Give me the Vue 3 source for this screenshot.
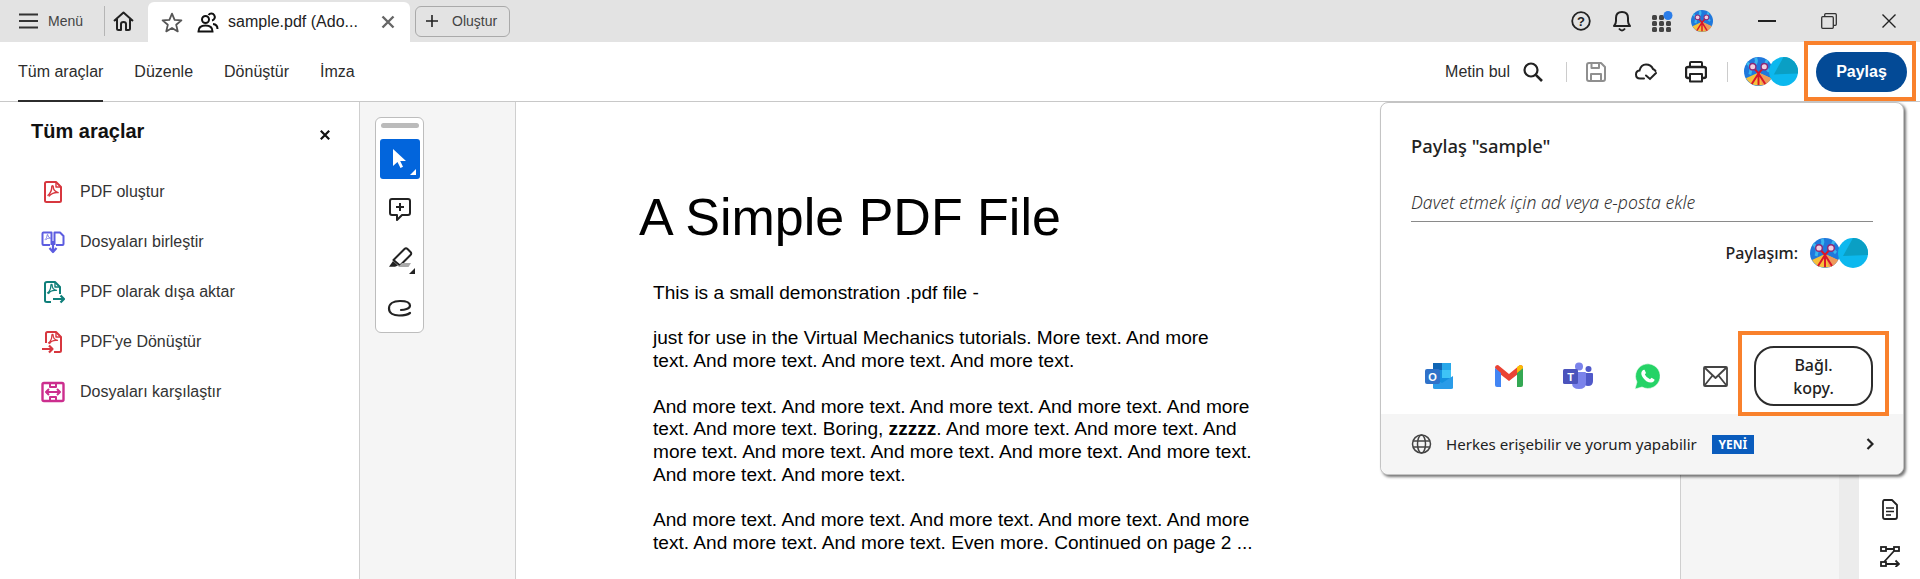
<template>
  <div class="app">
    <!-- shared symbols -->
    <svg class="defs" width="0" height="0">
      <symbol id="avatar-a" viewBox="0 0 30 30">
        <circle cx="15" cy="15" r="15" fill="#1f78dc" />
        <path d="M3 6 Q9 10 6 18 M24 3 Q20 10 26 15 M12 1 Q14 5 11 8" stroke="#39b6ee" stroke-width="3" fill="none" />
        <path d="M2 22 L15 16 L28 22 A15 15 0 0 1 2 22Z" fill="#f6c03c" />
        <path d="M15 16 L28 22 A15 15 0 0 1 19 29.500Z" fill="#ee9a5a" />
        <path d="M9 10 L15 17 L21 10 M15 17 L8 28 M15 17 L22 28 M15 17 V29" stroke="#d9162a" stroke-width="2" fill="none" />
        <circle cx="9" cy="10" r="3.300" fill="#f3cfe0" stroke="#8a2a78" stroke-width="1.400" />
        <circle cx="21" cy="10" r="3.300" fill="#f3cfe0" stroke="#8a2a78" stroke-width="1.400" />
      </symbol>
      <symbol id="avatar-b" viewBox="0 0 30 30">
        <circle cx="15" cy="15" r="15" fill="#0cb8ee" />
        <path d="M15 0 A15 15 0 0 1 30 15 V17 L5 18 Z" fill="#0a9fc4" />
      </symbol>
      <symbol id="pdf-glyph" viewBox="0 0 24 24">
        <path d="M5 18 C9 15 11 9 11 5 C11 3.500 13 3.500 13 5 C13 9 16 12.500 20 13.500 C15 13 9 15 7 19" fill="none" stroke="currentColor" stroke-width="2" />
      </symbol>
    </svg>

    <header class="titlebar">
      <svg class="menu-icon" width="19" height="16" viewBox="0 0 19 16"><path d="M0 1.500H19M0 8H19M0 14.500H19" stroke="#333" stroke-width="2" /></svg>
      <span class="menu-label">Menü</span>
      <span class="title-sep"></span>
      <svg class="home-icon" width="21" height="20" viewBox="0 0 21 20" fill="none" stroke="#222" stroke-width="2" stroke-linejoin="round"><path d="M1 10 L10.500 1.500 L20 10 M4 8 V17.500 Q4 19 5.500 19 H8 V13 Q8 11 10.500 11 Q13 11 13 13 V19 H15.500 Q17 19 17 17.500 V8" /></svg>
      <div class="tab">
        <svg width="22" height="21" viewBox="0 0 21 20" fill="none" stroke="#555" stroke-width="1.700" stroke-linejoin="round"><path d="M10.500 1.500 L13 7.500 L19.500 8 L14.500 12.200 L16 18.500 L10.500 15.200 L5 18.500 L6.500 12.200 L1.500 8 L8 7.500Z" /></svg>
        <svg class="people" width="22" height="21" viewBox="0 0 22 21" fill="none" stroke="#111" stroke-width="2"><circle cx="8.500" cy="7.500" r="3.500" /><path d="M1.500 19.500 Q1.500 13.500 8.500 13.500 Q15.500 13.500 15.500 19.500 Z" /><path d="M11.500 3 A3.500 3.500 0 1 1 15 8.500 M16 12 Q20.500 12.500 20.500 17" /></svg>
        <span class="tab-name">sample.pdf (Ado...</span>
        <svg class="tab-close" width="14" height="14" viewBox="0 0 14 14"><path d="M1.500 1.500L12.500 12.500M12.500 1.500L1.500 12.500" stroke="#666" stroke-width="2.400" /></svg>
      </div>
      <button class="create-btn">
        <svg width="12" height="12" viewBox="0 0 12 12"><path d="M6 0V12M0 6H12" stroke="#222" stroke-width="1.600" /></svg>
        <span>Oluştur</span>
      </button>

      <div class="title-right">
        <svg width="20" height="20" viewBox="0 0 20 20"><circle cx="10" cy="10" r="8.800" fill="none" stroke="#222" stroke-width="1.800" /><text x="10" y="14.500" text-anchor="middle" class="help-mark">?</text></svg>
        <svg class="bell" width="20" height="22" viewBox="0 0 20 22" fill="none" stroke="#222" stroke-width="2" stroke-linejoin="round"><path d="M2 16 Q4 14 4 11 V8 Q4 2 10 2 Q16 2 16 8 V11 Q16 14 18 16 Z" /><path d="M7 18.500 Q10 22.500 13 18.500" /></svg>
        <svg class="apps" width="22" height="21" viewBox="0 0 22 21" fill="#444">
          <rect x="0" y="4" width="5" height="5" rx="1.500" /><rect x="7" y="4" width="5" height="5" rx="1.500" />
          <rect x="0" y="10" width="5" height="5" rx="1.500" /><rect x="7" y="10" width="5" height="5" rx="1.500" /><rect x="14" y="10" width="5" height="5" rx="1.500" />
          <rect x="0" y="16" width="5" height="5" rx="1.500" /><rect x="7" y="16" width="5" height="5" rx="1.500" /><rect x="14" y="16" width="5" height="5" rx="1.500" />
          <circle cx="16" cy="4.500" r="4.500" fill="#2b7de9" />
        </svg>
        <svg class="title-avatar" width="22" height="22"><use href="#avatar-a" /></svg>
        <svg class="win-min" width="18" height="2"><rect width="18" height="2" fill="#222" /></svg>
        <svg class="win-max" width="16" height="16" viewBox="0 0 16 16" fill="none" stroke="#333" stroke-width="1.300"><rect x="0.700" y="3.700" width="11.600" height="11.600" rx="1" /><path d="M3.700 3.500 V1.700 Q3.700 0.700 4.700 0.700 H14.300 Q15.300 0.700 15.300 1.700 V11.300 Q15.300 12.300 14.300 12.300 H12.500" /></svg>
        <svg class="win-close" width="14" height="14" viewBox="0 0 14 14"><path d="M0.500 0.500L13.500 13.500M13.500 0.500L0.500 13.500" stroke="#222" stroke-width="1.400" /></svg>
      </div>
    </header>

    <nav class="toolbar">
      <a v-for="(item, i) in navItems" :key="item" class="nav-item" :class="{ active: i === 0 }">{{ item }}</a>
      <div class="toolbar-right">
        <span class="find-label">Metin bul</span>
        <svg class="find-icon" width="20" height="20" viewBox="0 0 20 20" fill="none" stroke="#222" stroke-width="2.200"><circle cx="8" cy="8" r="6.500" /><path d="M12.800 12.800L19 19" stroke-width="2.600" /></svg>
        <span class="tool-sep first"></span>
        <svg class="save-icon" width="20" height="20" viewBox="0 0 20 20" fill="none" stroke="#8f8f8f" stroke-width="2" stroke-linejoin="round"><path d="M3 1 H15 L19 5 V17 Q19 19 17 19 H3 Q1 19 1 17 V3 Q1 1 3 1Z" /><path d="M5.500 1 V6 H13 V1 M5 19 V12 H15 V19" /></svg>
        <svg class="cloud-icon" width="22" height="18" viewBox="0 0 22 18" fill="none" stroke="#222" stroke-width="2" stroke-linecap="round"><path d="M9 15.500 H5 Q1 15.500 1 11.500 Q1 8 4.500 7.500 Q6 1.500 11 1.500 Q16 1.500 18 6 Q20 7 20.500 8" /><path d="M11 12.500 L15 16 L21 10" /></svg>
        <svg class="print-icon" width="22" height="22" viewBox="0 0 22 22" fill="none" stroke="#222" stroke-width="2" stroke-linejoin="round"><path d="M5 6 V2 Q5 1 6 1 H16 Q17 1 17 2 V6" /><path d="M5 17 H3 Q1 17 1 15 V8 Q1 6 3 6 H19 Q21 6 21 8 V15 Q21 17 19 17 H17" stroke-width="2.400" /><rect x="5" y="13" width="12" height="7.500" /></svg>
        <span class="tool-sep"></span>
        <div class="avatars bar-avatars">
          <svg width="29" height="29"><use href="#avatar-a" /></svg>
          <svg width="29" height="29"><use href="#avatar-b" /></svg>
        </div>
        <button class="share-btn">Paylaş</button>
      </div>
    </nav>

    <main class="workspace">
      <aside class="tools-panel">
        <div class="panel-head">
          <h2>Tüm araçlar</h2>
          <svg width="10" height="10" viewBox="0 0 10 10"><path d="M0.800 0.800L9.200 9.200M9.200 0.800L0.800 9.200" stroke="#111" stroke-width="2.200" /></svg>
        </div>
        <ul class="tool-list">
          <li>
            <svg width="24" height="24" viewBox="0 0 24 24" fill="none" stroke="#d7373f" stroke-width="2" stroke-linejoin="round"><path d="M4 3.500 Q4 2 5.500 2 H15 L20 7 V20.500 Q20 22 18.500 22 H5.500 Q4 22 4 20.500Z" /><path d="M15 2 V7 H20" stroke-width="1.400" /><use href="#pdf-glyph" x="3" y="3" width="17" height="17" color="#d7373f" /></svg>
            <span>PDF oluştur</span>
          </li>
          <li>
            <svg width="24" height="24" viewBox="0 0 24 24" fill="none" stroke="#5c5ce0" stroke-width="2" stroke-linejoin="round"><path d="M9 15 H2.500 Q1.500 15 1.500 14 V3.500 Q1.500 2.500 2.500 2.500 H10.500 V15 M15 15 H21.500 Q22.500 15 22.500 14 V6 L19 2.500 H13.500 V15" /><path d="M12 11 V21 M8.500 18 L12 22 L15.500 18" stroke-width="2.200" /><use href="#pdf-glyph" x="2" y="3" width="9" height="9" color="#5c5ce0" /></svg>
            <span>Dosyaları birleştir</span>
          </li>
          <li>
            <svg width="24" height="24" viewBox="0 0 24 24" fill="none" stroke="#0f7f7a" stroke-width="2" stroke-linejoin="round"><path d="M10 22 H6 Q4 22 4 20.500 V3.500 Q4 2 6 2 H14 L19 7 V14" /><path d="M14 2 V7 H19" stroke-width="1.400" /><path d="M12 19 H23 M19.500 15.500 L23 19 L19.500 22.500" stroke-width="2.200" /><use href="#pdf-glyph" x="3" y="2" width="15" height="15" color="#0f7f7a" /></svg>
            <span>PDF olarak dışa aktar</span>
          </li>
          <li>
            <svg width="24" height="24" viewBox="0 0 24 24" fill="none" stroke="#d7373f" stroke-width="2" stroke-linejoin="round"><path d="M5 13 V3.500 Q5 2 6.500 2 H15 L20 7 V20.500 Q20 22 18.500 22 H13" /><path d="M15 2 V7 H20" stroke-width="1.400" /><path d="M1 19 H11 M8 15.500 L11.500 19 L8 22.500" stroke-width="2.200" /><use href="#pdf-glyph" x="4" y="2" width="15" height="15" color="#d7373f" /></svg>
            <span>PDF'ye Dönüştür</span>
          </li>
          <li>
            <svg width="24" height="24" viewBox="0 0 24 24" fill="none" stroke="#cc2e8e" stroke-width="2.400" stroke-linejoin="round"><rect x="1.500" y="3" width="21" height="18" rx="1.500" /><path d="M9 3 V7 H15 V3 M9 21 V17 H15 V21 M5 12 H19 M8 9 L5 12 L8 15 M16 9 L19 12 L16 15" stroke-width="2" /></svg>
            <span>Dosyaları karşılaştır</span>
          </li>
        </ul>
      </aside>

      <section class="gutter">
        <div class="palette">
          <div class="grabber"></div>
          <div class="palette-btn selected">
            <svg width="40" height="40" viewBox="0 0 40 40"><path d="M13 10 V27 L17.500 23 L20.500 29 L23 27.800 L20.200 22 H26Z" fill="#fff" /><path d="M36 30 V36 H30Z" fill="#fff" /></svg>
          </div>
          <div class="palette-btn">
            <svg width="40" height="40" viewBox="0 0 40 40" fill="none" stroke="#222" stroke-width="2" stroke-linejoin="round"><path d="M12 10 H28 Q30 10 30 12 V24 Q30 26 28 26 H22 L17 31 V26 H12 Q10 26 10 24 V12 Q10 10 12 10Z" /><path d="M20 14 V22 M16 18 H24" /></svg>
          </div>
          <div class="palette-btn">
            <svg width="40" height="40" viewBox="0 0 40 40"><path d="M13.500 21 L24.500 10 Q26 8.500 27.500 10 L30.500 13 Q32 14.500 30.500 16 L20 26.500Z" fill="none" stroke="#222" stroke-width="2" stroke-linejoin="round" /><path d="M9 27.800 L13 22 L18 26.500 L15 27.800Z" fill="#222" /><path d="M18 28 L22 24 H31 L28.500 28Z" fill="#aaa" /><path d="M35 29 V35 H29Z" fill="#222" /></svg>
          </div>
          <div class="palette-btn">
            <svg width="40" height="40" viewBox="0 0 40 40" fill="none" stroke="#222" stroke-width="2.200" stroke-linecap="round"><path d="M21 21 C24 21 30 20 30 16.500 C30 13 25 12 20 12 C13 12 9 15 9 19.500 C9 24.500 14 26.500 19 26.500 C24 26.500 28 25.500 30 24" /></svg>
          </div>
        </div>
      </section>

      <article class="doc">
        <h1>A Simple PDF File</h1>
        <p>This is a small demonstration .pdf file -</p>
        <p>just for use in the Virtual Mechanics tutorials. More text. And more<br />text. And more text. And more text. And more text.</p>
        <p>And more text. And more text. And more text. And more text. And more<br />text. And more text. Boring, <b>zzzzz</b>. And more text. And more text. And<br />more text. And more text. And more text. And more text. And more text.<br />And more text. And more text.</p>
        <p>And more text. And more text. And more text. And more text. And more<br />text. And more text. And more text. Even more. Continued on page 2 ...</p>
      </article>

      <div class="side-gray"></div>
      <div class="scroll-track"></div>

      <aside class="rail">
        <svg width="16" height="21" viewBox="0 0 16 21" fill="none" stroke="#222" stroke-width="1.800" stroke-linejoin="round"><path d="M2.500 1 H10 L15 6 V18 Q15 20 13 20 H3 Q1 20 1 18 V3 Q1 1 2.500 1Z" /><path d="M4 9 H12 M4 12.500 H12 M4 16 H9" stroke-width="1.400" /></svg>
        <svg width="20" height="21" viewBox="0 0 20 21" fill="none" stroke="#222" stroke-width="1.800"><rect x="1" y="1" width="5" height="4" /><rect x="14" y="1" width="5" height="4" /><rect x="1" y="16" width="5" height="4" /><path d="M6 3 H14 M14 5 L4 16 M6 18 H19 M15.500 14.500 L19 18 L15.500 21" /></svg>
      </aside>
    </main>

    <section class="popover">
      <h3>Paylaş "sample"</h3>
      <div class="invite">Davet etmek için ad veya e-posta ekle</div>
      <div class="shared-row">
        <span>Paylaşım:</span>
        <div class="avatars">
          <svg width="30" height="30"><use href="#avatar-a" /></svg>
          <svg width="30" height="30"><use href="#avatar-b" /></svg>
        </div>
      </div>
      <div class="share-row">
        <svg width="28" height="28" viewBox="0 0 28 28">
          <rect x="8" y="1" width="18" height="25" rx="2" fill="#1490df" />
          <rect x="8" y="1" width="9" height="7" fill="#1066b5" />
          <rect x="17" y="1" width="9" height="7" fill="#28a8ea" />
          <rect x="17" y="8" width="9" height="8" fill="#50d9ff" opacity=".7" />
          <path d="M8 16 L17 21 L28 14 V26 Q28 27 26 27 H10 Q8 27 8 26Z" fill="#2a9ce8" />
          <rect x="0" y="7" width="15" height="15" rx="2" fill="#2f72c9" />
          <text x="7.500" y="18.500" text-anchor="middle" class="logo-letter">O</text>
        </svg>
        <svg class="gmail" width="28" height="22" viewBox="0 0 28 22">
          <path d="M0 3 Q0 0 3 0 L14 9 L25 0 Q28 0 28 3 L23 9 L14 16 L5 9Z" fill="#ea4335" />
          <path d="M0 3 L6 8 V22 H2 Q0 22 0 20Z" fill="#4285f4" />
          <path d="M28 3 L22 8 V22 H26 Q28 22 28 20Z" fill="#34a853" />
          <path d="M22 8 V2 L25 0 Q28 0 28 3Z" fill="#fbbc04" />
        </svg>
        <svg class="teams" width="30" height="28" viewBox="0 0 30 28">
          <circle cx="16" cy="4.500" r="4" fill="#7b83eb" />
          <circle cx="25.500" cy="7" r="3" fill="#5059c9" />
          <path d="M21 11 H29 Q30 11 30 12 V19 Q30 24 25 24 Q21 24 21 20Z" fill="#5059c9" />
          <path d="M9 10 H22 Q23 10 23 11 V21 Q23 27 16 27 Q9 27 9 21Z" fill="#7b83eb" />
          <rect x="0" y="7" width="15" height="15" rx="1.500" fill="#4b53bc" />
          <text x="7.500" y="18.500" text-anchor="middle" class="logo-letter">T</text>
        </svg>
        <svg class="whatsapp" width="26" height="27" viewBox="0 0 26 27">
          <path d="M1 26 L3 19 A12.300 12.300 0 1 1 8 24Z" fill="#25d366" stroke="#eef8f0" stroke-width=".6" />
          <path d="M9 7 L10.500 6.800 L12 10 L10.800 11.600 Q12.500 15 16 16.200 L17.500 14.800 L20.500 16.500 Q20.500 19 17 19.500 Q12 19.500 8.500 14 Q5.800 9.500 9 7Z" fill="#fff" />
        </svg>
        <svg class="mail" width="25" height="21" viewBox="0 0 25 21" fill="none" stroke="#444" stroke-width="1.800" stroke-linejoin="round"><rect x="1" y="1" width="23" height="19" rx="1" /><path d="M1.500 1.500 L12.500 12 L23.500 1.500 M1.500 19.500 L9.500 9.500 M23.500 19.500 L15.500 9.500" /></svg>
        <button class="copy-btn">Bağl.<br />kopy.</button>
      </div>
      <footer class="access-row">
        <svg width="21" height="20" viewBox="0 0 21 20" fill="none" stroke="#444" stroke-width="1.500"><circle cx="10.500" cy="10" r="9" /><ellipse cx="10.500" cy="10" rx="4" ry="9" /><path d="M2 7 H19 M2 13 H19" /></svg>
        <span class="access-text">Herkes erişebilir ve yorum yapabilir</span>
        <span class="new-badge">YENİ</span>
        <svg class="chevron" width="8" height="12" viewBox="0 0 8 12"><path d="M1.500 1L6.500 6L1.500 11" fill="none" stroke="#222" stroke-width="2.200" /></svg>
      </footer>
    </section>

    <div class="mark mark-share"></div>
    <div class="mark mark-copy"></div>
  </div>
</template>

<script setup>
const navItems = ['Tüm araçlar', 'Düzenle', 'Dönüştür', 'İmza']
</script>

<style>
html, body {
  margin: 0;
  background: #fff;
}
</style>

<style scoped>
.app {
  position: relative;
  width: 1920px;
  height: 579px;
  overflow: hidden;
  background: #fff;
  font-family: "Liberation Sans", Arial, sans-serif;
  color: #2c2c2c;
}

.defs {
  position: absolute;
}

.titlebar {
  display: flex;
  align-items: center;
  height: 42px;
  padding-left: 19px;
  box-sizing: border-box;
  background: #e3e3e3;
}

.menu-label {
  margin-left: 10px;
  font-size: 14px;
  color: #444;
}

.title-sep {
  width: 1px;
  height: 30px;
  margin-left: 21px;
  background: #b5b5b5;
}

.home-icon {
  margin-left: 8px;
}

.tab {
  display: flex;
  align-items: center;
  align-self: flex-end;
  width: 262px;
  height: 40px;
  margin-left: 14px;
  padding-left: 13px;
  box-sizing: border-box;
  background: #fff;
  border-radius: 6px 6px 0 0;
}

.people {
  margin-left: 14px;
}

.tab-name {
  margin-left: 9px;
  font-size: 16px;
  color: #222;
  white-space: nowrap;
}

.tab-close {
  margin-left: 23px;
}

.create-btn {
  display: flex;
  align-items: center;
  gap: 14px;
  width: 95px;
  height: 31px;
  margin-left: 5px;
  padding: 0 0 0 10px;
  box-sizing: border-box;
  background: #e3e3e3;
  border: 1px solid #aaa;
  border-radius: 6px;
  font-family: inherit;
  font-size: 14px;
  color: #444;
}

.title-right {
  display: flex;
  align-items: center;
  margin-left: auto;
  padding-right: 24px;
}

.help-mark {
  font-size: 13px;
  font-weight: 700;
  fill: #222;
}

.bell { margin-left: 21px; }
.apps { margin-left: 20px; }
.title-avatar { margin-left: 17px; }
.win-min { margin-left: 45px; }
.win-max { margin-left: 45px; }
.win-close { margin-left: 45px; }

.toolbar {
  display: flex;
  align-items: stretch;
  height: 60px;
  padding-left: 18px;
  box-sizing: border-box;
  border-bottom: 1px solid #c8c8c8;
}

.nav-item {
  display: flex;
  align-items: center;
  margin-right: 31px;
  margin-bottom: -1px;
  padding-top: 1px;
  border-bottom: 2px solid transparent;
  font-size: 16px;
  color: #2c2c2c;
}

.nav-item.active {
  border-bottom-color: #2c2c2c;
}

.toolbar-right {
  display: flex;
  align-items: center;
  margin-left: auto;
  padding-right: 13px;
}

.find-label {
  font-size: 16px;
  color: #2c2c2c;
}

.find-icon { margin-left: 13px; }

.tool-sep {
  width: 1px;
  height: 20px;
  margin: 0 16px 0 20px;
  background: #ccc;
}

.tool-sep.first { margin: 0 19px 0 23px; }
.cloud-icon { margin-left: 29px; }
.print-icon { margin-left: 28px; }

.avatars {
  display: flex;
}

.avatars svg + svg {
  margin-left: -2px;
}

.bar-avatars svg + svg {
  margin-left: -4px;
}

.share-btn {
  width: 91px;
  height: 40px;
  margin-left: 18px;
  background: #034a96;
  border: 0;
  border-radius: 20px;
  font-family: inherit;
  font-size: 16px;
  font-weight: 700;
  color: #fff;
}

.workspace {
  display: flex;
  height: 477px;
}

.tools-panel {
  width: 359px;
  flex: none;
  border-right: 1px solid #cfcfcf;
}

.panel-head {
  display: flex;
  align-items: flex-start;
  justify-content: space-between;
  padding: 17px 29px 0 31px;
}

.panel-head h2 {
  margin: 0;
  font-size: 20px;
  line-height: 24px;
  font-weight: 700;
  color: #111;
}

.panel-head svg {
  margin-top: 11px;
}

.tool-list {
  margin: 0;
  padding: 24px 0 0 41px;
  list-style: none;
}

.tool-list li {
  display: flex;
  align-items: center;
  gap: 15px;
  height: 50px;
  font-size: 16px;
  color: #333;
}

.gutter {
  width: 156px;
  flex: none;
  box-sizing: border-box;
  padding: 15px 0 0 15px;
  background: #f5f5f5;
  border-right: 1px solid #cfcfcf;
}

.palette {
  display: flex;
  flex-direction: column;
  width: 49px;
  height: 216px;
  box-sizing: border-box;
  padding: 5px 4px 0;
  background: #fff;
  border: 1px solid #bdbdbd;
  border-radius: 6px;
}

.grabber {
  flex: none;
  height: 5px;
  margin: 0 0 11px 1px;
  background: #bbb;
  border-radius: 3px;
}

.palette-btn {
  flex: none;
  width: 40px;
  height: 50px;
  display: flex;
  align-items: center;
}

.palette-btn.selected {
  height: 40px;
  margin-bottom: 5px;
  background: #0265dc;
  border-radius: 3px;
}

.doc {
  width: 1165px;
  flex: none;
  box-sizing: border-box;
  padding-left: 137px;
  background: #fff;
  border-right: 1px solid #cfcfcf;
  color: #000;
}

.doc h1 {
  margin: 85px 0 0 -14px;
  font-size: 52px;
  line-height: 60px;
  font-weight: 400;
  white-space: nowrap;
}

.doc p {
  margin: 0 0 22.600px;
  font-size: 19.100px;
  line-height: 22.800px;
  white-space: nowrap;
}

.doc h1 + p {
  margin-top: 35px;
}

.side-gray {
  width: 158px;
  flex: none;
  background: #f5f5f5;
}

.scroll-track {
  width: 20px;
  flex: none;
  background: #ececec;
}

.rail {
  flex: 1;
  display: flex;
  flex-direction: column;
  align-items: center;
  gap: 26px;
  padding-top: 397px;
  box-sizing: border-box;
  background: #fff;
}

.popover {
  position: absolute;
  left: 1380px;
  top: 102px;
  width: 524px;
  height: 373px;
  box-sizing: border-box;
  display: flex;
  flex-direction: column;
  background: #fff;
  border: 1px solid #c4c4c4;
  border-radius: 8px;
  box-shadow: 2px 2px 3px rgba(0, 0, 0, 0.55);
  font-family: "Noto Sans", Lato, sans-serif;
  color: #222;
}

.popover h3 {
  margin: 31px 0 0 30px;
  font-size: 18.400px;
  line-height: 24px;
  font-weight: 500;
}

.invite {
  margin: 33px 30px 0;
  padding-bottom: 8px;
  border-bottom: 1px solid #8a8a8a;
  font-size: 17.600px;
  line-height: 22px;
  font-style: italic;
  font-weight: 300;
  color: #333;
}

.shared-row {
  display: flex;
  align-items: center;
  justify-content: flex-end;
  gap: 12px;
  margin: 16px 35px 0 0;
  font-size: 16px;
  font-weight: 500;
}

.share-row {
  display: flex;
  align-items: center;
  height: 60px;
  margin: 78px 0 0 44px;
}

.gmail { margin-left: 42px; }
.teams { margin-left: 40px; }
.whatsapp { margin-left: 41px; }
.mail { margin-left: 43px; }

.logo-letter {
  font-family: "Liberation Sans", sans-serif;
  font-size: 11px;
  font-weight: 700;
  fill: #fff;
}

.copy-btn {
  width: 119px;
  height: 60px;
  margin-left: 26px;
  padding: 1px 0 0;
  background: #fff;
  border: 2px solid #2c2c2c;
  border-radius: 20px;
  font-family: inherit;
  font-size: 16px;
  line-height: 23px;
  font-weight: 500;
  color: #222;
}

.access-row {
  display: flex;
  align-items: center;
  height: 60px;
  margin-top: auto;
  padding: 0 29px 0 30px;
  background: #f5f5f5;
  border-radius: 0 0 8px 8px;
  font-size: 15.100px;
}

.access-text {
  margin-left: 14px;
}

.new-badge {
  margin-left: 15px;
  width: 42px;
  height: 19px;
  background: #0a5cbd;
  font-size: 12px;
  line-height: 19px;
  text-align: center;
  font-weight: 700;
  color: #fff;
}

.chevron {
  margin-left: auto;
}

/* orange annotation boxes from the screenshot */
.mark {
  position: absolute;
  box-sizing: border-box;
  border: 4px solid #f9812c;
}

.mark-share {
  left: 1804px;
  top: 41px;
  width: 112px;
  height: 60px;
}

.mark-copy {
  left: 1738px;
  top: 331px;
  width: 151px;
  height: 85px;
}
</style>
